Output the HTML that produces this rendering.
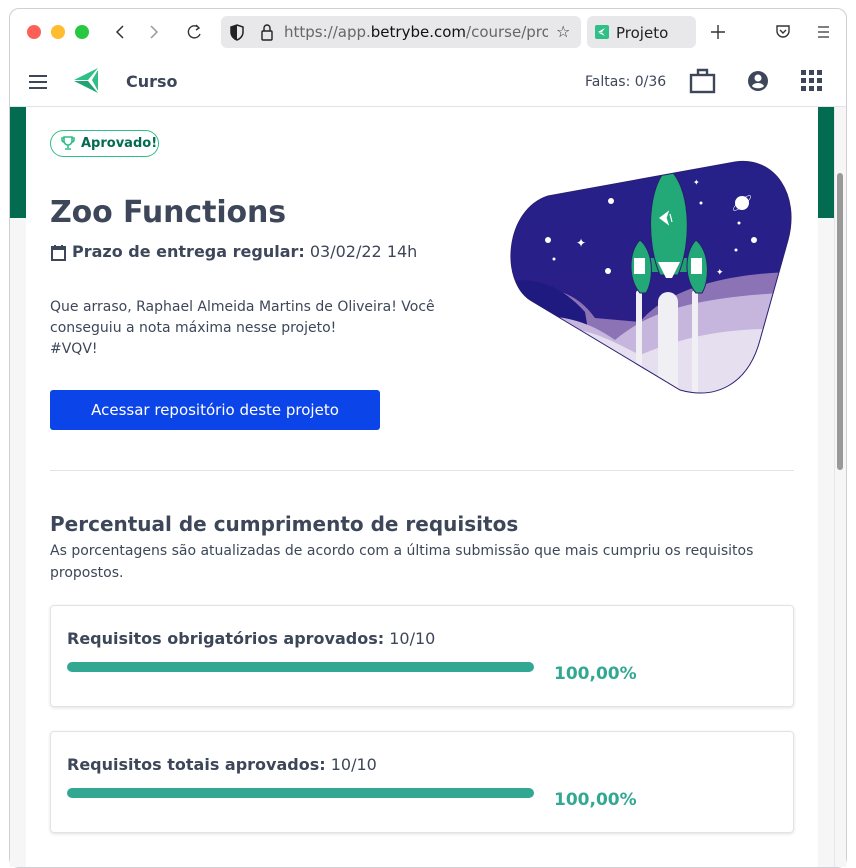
<!DOCTYPE html>
<html><head><meta charset="utf-8"><style>
*{margin:0;padding:0;box-sizing:border-box}
body{width:856px;height:856px;background:#fff;font-family:"DejaVu Sans","Liberation Sans",sans-serif;position:relative;overflow:hidden;color:#3d4759}
.win{position:absolute;left:9px;top:8px;width:838px;height:860px;border:1px solid #cfcfd4;border-radius:10px;background:#fff;overflow:hidden}
.abs{position:absolute}
</style></head><body>
<div class="win"></div>
<!-- toolbar -->
<div class="abs" style="left:27px;top:25px;width:14px;height:14px;border-radius:50%;background:#fe5f57"></div>
<div class="abs" style="left:51px;top:25px;width:14px;height:14px;border-radius:50%;background:#febc2e"></div>
<div class="abs" style="left:75px;top:25px;width:14px;height:14px;border-radius:50%;background:#28c840"></div>
<svg class="abs" style="left:110px;top:22px" width="100" height="20"><path d="M13 4 L7 10 L13 16" stroke="#333" stroke-width="1.5" fill="none"/><path d="M41 4 L47 10 L41 16" stroke="#999" stroke-width="1.5" fill="none"/><path d="M89 6 A6 6 0 1 0 90 12 M86 3 L89 6 L86 8" stroke="#333" stroke-width="1.4" fill="none"/></svg>
<div class="abs" style="left:221px;top:16px;width:360px;height:32px;background:#e8e8ea;border-radius:6px"></div>
<svg class="abs" style="left:230px;top:24px" width="50" height="18"><path d="M7 1 L13 3 V8 C13 12 10 15 7 16 C4 15 1 12 1 8 V3 Z" stroke="#222" stroke-width="1.5" fill="none"/><path d="M7 1 V16 C4 15 1 12 1 8 V3Z" fill="#222"/><rect x="32" y="7" width="10" height="9" rx="1" stroke="#222" stroke-width="1.4" fill="none"/><path d="M34 7 V4 A3 3 0 0 1 40 4 V7" stroke="#222" stroke-width="1.4" fill="none"/></svg>
<div class="abs" style="left:284px;top:23px;font-size:15px;color:#666;width:264px;white-space:nowrap;overflow:hidden">https://app.<span style="color:#111">betrybe.com</span>/course/projeto</div>
<div class="abs" style="left:556px;top:22px;font-size:16px;color:#333">☆</div>
<div class="abs" style="left:587px;top:16px;width:109px;height:32px;background:#e8e8ea;border-radius:6px"></div>
<div class="abs" style="left:595px;top:25px;width:14px;height:14px;background:#2fbf87;border-radius:2px"></div>
<svg class="abs" style="left:597px;top:27px" width="10" height="10"><path d="M1 5 L8 1 L5 5 Z M1 5.5 L5 5.5 L8 9Z" fill="#fff"/></svg>
<div class="abs" style="left:616px;top:24px;font-size:15px;color:#222">Projeto</div>
<svg class="abs" style="left:710px;top:24px" width="16" height="16"><path d="M8 1 V15 M1 8 H15" stroke="#333" stroke-width="1.4"/></svg>
<svg class="abs" style="left:775px;top:24px" width="60" height="16"><path d="M2 2 H14 V7 A6 6 0 0 1 2 7 Z" stroke="#333" stroke-width="1.4" fill="none"/><path d="M5 6 L8 9 L11 6" stroke="#333" stroke-width="1.4" fill="none"/><path d="M43 3 H54 M43 8 H54 M43 13 H54" stroke="#333" stroke-width="1.3"/></svg>
<!-- app header -->
<svg class="abs" style="left:28px;top:74px" width="20" height="16"><path d="M1 2 H19 M1 8 H19 M1 14 H19" stroke="#3d4759" stroke-width="2"/></svg>
<svg class="abs" style="left:72px;top:66px" width="30" height="30"><path d="M2 14 L26 2 L16 14 Z" fill="#2fbf87"/><path d="M2 15 L16 15 L26 27 Z" fill="#22a374"/><path d="M20 14 L26 4 V25 Z" fill="#2fbf87"/></svg>
<div class="abs" style="left:126px;top:72px;font-size:16px;font-weight:bold;color:#3d4759">Curso</div>
<div class="abs" style="left:585px;top:74px;font-size:14px;color:#3d4759">Faltas: 0/36</div>
<svg class="abs" style="left:689px;top:68px" width="28" height="26"><rect x="2" y="7" width="23" height="17" stroke="#3d4759" stroke-width="2.4" fill="none"/><path d="M9 7 V2 H18 V7" stroke="#3d4759" stroke-width="2.4" fill="none"/></svg>
<svg class="abs" style="left:747px;top:70px" width="22" height="22"><circle cx="11" cy="11" r="10" fill="#3d4759"/><circle cx="11" cy="8" r="3.5" fill="#fff"/><path d="M5 16 C7 12 15 12 17 16 C15 19 7 19 5 16Z" fill="#fff"/></svg>
<svg class="abs" style="left:801px;top:70px" width="22" height="22" fill="#3d4759"><rect x="0" y="0" width="5" height="5"/><rect x="8" y="0" width="5" height="5"/><rect x="16" y="0" width="5" height="5"/><rect x="0" y="8" width="5" height="5"/><rect x="8" y="8" width="5" height="5"/><rect x="16" y="8" width="5" height="5"/><rect x="0" y="16" width="5" height="5"/><rect x="8" y="16" width="5" height="5"/><rect x="16" y="16" width="5" height="5"/></svg>
<div class="abs" style="left:10px;top:106px;width:836px;height:1px;background:#e2e2ea"></div>
<!-- page sides -->
<div class="abs" style="left:10px;top:107px;width:16px;height:760px;background:#f6f6f7"></div>
<div class="abs" style="left:10px;top:107px;width:16px;height:111px;background:#036b50"></div>
<div class="abs" style="left:818px;top:107px;width:28px;height:760px;background:#f6f6f7"></div>
<div class="abs" style="left:818px;top:107px;width:16px;height:111px;background:#036b50"></div>
<div class="abs" style="left:834px;top:107px;width:1px;height:760px;background:#e6e6e6"></div>
<div class="abs" style="left:837px;top:173px;width:6px;height:297px;background:#999;border-radius:3px"></div>
<!-- content -->
<div class="abs" style="left:50px;top:130px;width:109px;height:27px;border:1px solid #2fbf87;border-radius:14px"></div>
<svg class="abs" style="left:61px;top:136px" width="14" height="15"><path d="M3 1 H11 V5 A4 4 0 0 1 3 5 Z M3 2 H1 V4 A2 2 0 0 0 3 6 M11 2 H13 V4 A2 2 0 0 1 11 6 M7 9 V12 M4 13 H10" stroke="#2fbf87" stroke-width="1.6" fill="none"/></svg>
<div class="abs" style="left:81px;top:136px;font-size:13px;font-weight:bold;color:#036b50">Aprovado!</div>
<div class="abs" style="left:50px;top:195px;font-size:30px;font-weight:bold;color:#3d4759;letter-spacing:-0.1px">Zoo Functions</div>
<svg class="abs" style="left:51px;top:244px" width="16" height="17"><rect x="1" y="3" width="13" height="13" stroke="#3d4759" stroke-width="2" fill="none"/><rect x="1" y="3" width="13" height="3" fill="#3d4759"/><path d="M4 1 V4 M11 1 V4" stroke="#3d4759" stroke-width="2"/></svg>
<div class="abs" style="left:72px;top:242px;font-size:16px;color:#3d4759;white-space:nowrap"><b>Prazo de entrega regular:</b> 03/02/22 14h</div>
<div class="abs" style="left:50px;top:297px;font-size:14px;line-height:21px;color:#3d4759;width:420px">Que arraso, Raphael Almeida Martins de Oliveira! Você conseguiu a nota máxima nesse projeto!<br>#VQV!</div>
<div class="abs" style="left:50px;top:390px;width:330px;height:40px;background:#0b44e8;border-radius:3px;color:#fff;font-size:15px;text-align:center;line-height:40px">Acessar repositório deste projeto</div>
<!-- illustration -->
<svg class="abs" style="left:505px;top:158px" width="290" height="242" viewBox="505 158 290 242">
<defs>
<clipPath id="c"><path d="M548 196 L735 162 C775 156 800 195 788 240 L760 340 C748 385 715 400 680 390 L530 300 C500 280 505 210 548 196Z"/></clipPath>
<linearGradient id="sky" x1="0" y1="0" x2="0" y2="1"><stop offset="0" stop-color="#252089"/><stop offset="1" stop-color="#2e1e86"/></linearGradient>
</defs>
<g clip-path="url(#c)">
<rect x="505" y="158" width="290" height="242" fill="url(#sky)"/>
<path d="M520 300 C545 282 575 290 595 318 L640 322 C670 285 740 272 800 272 V400 H505Z" fill="#8c73b5"/>
<path d="M505 282 C540 275 565 290 585 312 L600 400 H505Z" fill="#1f1a80"/>
<path d="M520 318 C560 312 590 322 615 340 C650 310 700 296 800 292 V400 H505Z" fill="#c6b5dc"/>
<path d="M540 330 C580 322 610 340 640 355 C680 338 730 325 800 330 V400 H505Z" fill="#e6dfef"/>
<circle cx="742" cy="203" r="7" fill="#fff"/>
<ellipse cx="742" cy="203" rx="11" ry="3" fill="none" stroke="#fff" stroke-width="0.6" transform="rotate(-40 742 203)"/>
<g fill="#fff"><circle cx="611" cy="201" r="3"/><circle cx="548" cy="240" r="3"/><circle cx="608" cy="271" r="3"/><circle cx="754" cy="240" r="3"/><circle cx="701" cy="203" r="1.5"/><circle cx="739" cy="223" r="1.5"/><circle cx="554" cy="259" r="1.5"/><circle cx="736" cy="250" r="1.5"/></g>
<text x="576" y="247" fill="#fff" font-size="12">✦</text><text x="716" y="275" fill="#fff" font-size="9">✦</text><text x="693" y="185" fill="#fff" font-size="8">✦</text>
<rect x="658" y="292" width="20" height="110" rx="10" fill="#f0f0f4"/>
<rect x="636" y="290" width="6" height="110" rx="3" fill="#f0f0f4"/>
<rect x="692" y="290" width="6" height="110" rx="3" fill="#f0f0f4"/>
<path d="M645 272 L650 258 L700 258 L705 272Z" fill="#1f9e70"/>
<path d="M668 168 C648 185 645 240 660 275 L678 275 C693 240 690 185 668 168Z" fill="#23a878" stroke="#2a1e70" stroke-width="1"/>
<path d="M658 262 L680 262 L672 278 L666 278Z" fill="#fff"/>
<path d="M640 240 C628 252 628 280 640 293 L646 293 C654 280 654 252 640 240Z" fill="#23a878" stroke="#2a1e70"/>
<path d="M696 240 C684 252 684 280 696 293 L702 293 C710 280 710 252 696 240Z" fill="#23a878" stroke="#2a1e70"/>
<rect x="634" y="258" width="11" height="16" fill="#fff"/><rect x="691" y="258" width="11" height="16" fill="#fff"/>
<path d="M660 218 L668 212 L666 218 L668 224Z M670 214 L672 222" stroke="#fff" fill="#fff" stroke-width="1.2"/>
</g>
<path d="M548 196 L735 162 C775 156 800 195 788 240 L760 340 C748 385 715 400 680 390 L530 300 C500 280 505 210 548 196Z" fill="none" stroke="#2a1e70" stroke-width="1"/>
</svg>
<div class="abs" style="left:50px;top:470px;width:744px;height:1px;background:#e2e2ea"></div>
<div class="abs" style="left:50px;top:512px;font-size:20px;font-weight:bold;color:#3d4759">Percentual de cumprimento de requisitos</div>
<div class="abs" style="left:50px;top:540px;font-size:14px;line-height:22px;color:#3d4759;width:750px">As porcentagens são atualizadas de acordo com a última submissão que mais cumpriu os requisitos propostos.</div>
<div class="abs" style="left:50px;top:605px;width:744px;height:102px;border:1px solid #e2e2ea;border-radius:4px;box-shadow:0 1px 3px rgba(0,0,0,.12)"></div>
<div class="abs" style="left:67px;top:629px;font-size:16px;color:#3d4759"><b>Requisitos obrigatórios aprovados:</b> 10/10</div>
<div class="abs" style="left:67px;top:662px;width:467px;height:10px;background:#32a892;border-radius:5px"></div>
<div class="abs" style="left:554px;top:664px;font-size:17px;font-weight:bold;color:#32a892">100,00%</div>
<div class="abs" style="left:50px;top:731px;width:744px;height:102px;border:1px solid #e2e2ea;border-radius:4px;box-shadow:0 1px 3px rgba(0,0,0,.12)"></div>
<div class="abs" style="left:67px;top:755px;font-size:16px;color:#3d4759"><b>Requisitos totais aprovados:</b> 10/10</div>
<div class="abs" style="left:67px;top:788px;width:467px;height:10px;background:#32a892;border-radius:5px"></div>
<div class="abs" style="left:554px;top:790px;font-size:17px;font-weight:bold;color:#32a892">100,00%</div>
</body></html>
